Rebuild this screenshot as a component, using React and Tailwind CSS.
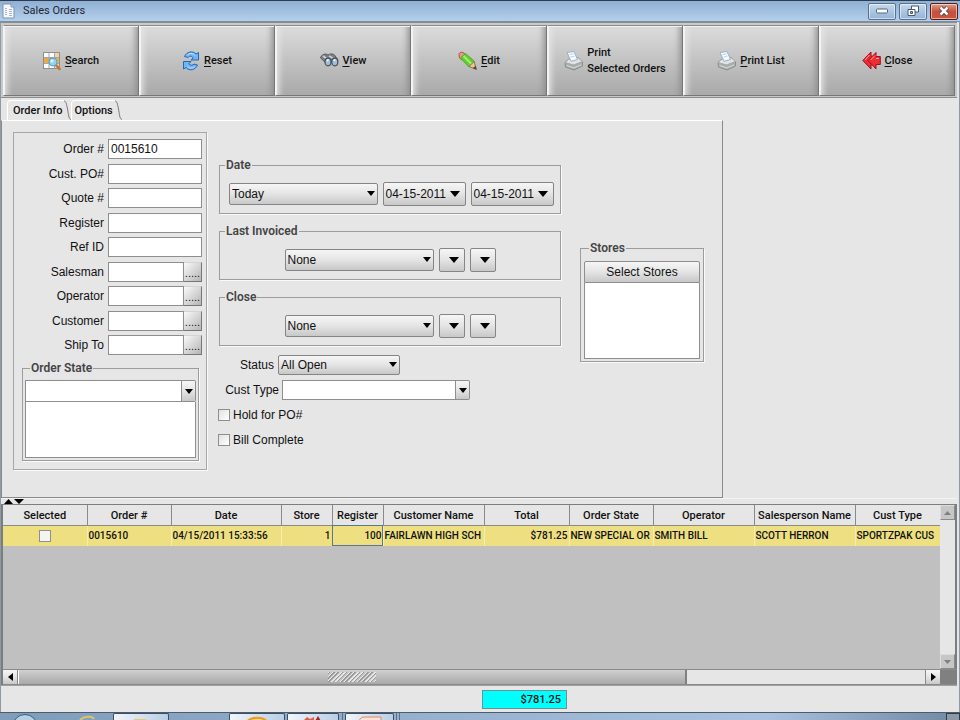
import React from "react";

const UI = "font-[Roboto,'Noto_Sans',sans-serif]";
const field = "border border-[#8e8e8e] bg-white px-[2px] outline-none min-w-0";
const raised = "bg-linear-to-b from-[#f6f6f6] via-[#e4e4e4] to-[#c8c8c8]";

function Caret({ small, className = "" }) {
  return (
    <svg className={className} width={small ? 8 : 10} height={small ? 5 : 6} viewBox="0 0 10 6" aria-hidden="true">
      <path d="M0 0h10L5 6z" fill="#000" />
    </svg>
  );
}

function PageIcon() {
  return (
    <svg width="13" height="16" viewBox="0 0 13 16" aria-hidden="true">
      <path d="M1 1h8l3 3v11H1z" fill="#f4f8fc" stroke="#7f93ab" />
      <path d="M9 1v3h3" fill="#cfdcec" stroke="#7f93ab" />
      <path d="M3 5.500h2M3 7.500h2M3 9.500h2M3 11.500h2M7 6.500h3M7 8.500h3M7 10.500h3M7 12.500h3" stroke="#a9b6c9" />
    </svg>
  );
}

function SearchIcon() {
  return (
    <svg width="18" height="20" viewBox="0 0 18 20" aria-hidden="true">
      <rect x="0.5" y="1.5" width="16" height="16" fill="#fff" stroke="#8b8f96" />
      <rect x="1" y="7" width="15" height="5" fill="#f0a93a" />
      <rect x="12" y="2" width="4" height="15" fill="#f0b45a" fillOpacity="0.6" />
      <path d="M6 2v15M11.500 2v15M1 6.500h15M1 12.500h15" stroke="#9fa6b0" />
      <path d="M13 14l3.500 4" stroke="#c9742a" strokeWidth="2.500" strokeLinecap="round" />
      <circle cx="10" cy="11" r="4" fill="#8fd4f2" stroke="#5aa0c8" />
      <circle cx="9" cy="10" r="1.500" fill="#e6f9ff" />
    </svg>
  );
}

function ResetIcon() {
  return (
    <svg width="18" height="20" viewBox="0 0 18 20" aria-hidden="true">
      <g fill="#6fb6f3" stroke="#2667b5" strokeWidth="1" strokeLinejoin="round">
        <path d="M2.500 5.500C4.500 0.500 11 -0.500 14 3l2.500-1.500v7.500H9l2.200-2.200C9.500 4.500 7 5 6 6.500z" />
        <path d="M15.500 14c-2 5-8 6.500-11.500 2.500L1.500 18v-7.500H9l-2.200 2.300c1.700 2 4.200 1.700 5.200 0.200z" />
      </g>
      <path d="M5 4.500C7 1.800 11 1.800 13 4.500M13 15.500c-2 2.200-5.500 2.200-7.500 0" fill="none" stroke="#c3e2fb" />
    </svg>
  );
}

function ViewIcon() {
  return (
    <svg width="19" height="20" viewBox="0 0 19 20" aria-hidden="true">
      <path d="M0.500 7C1 4 4 3 6 3l2 1c2-1.500 5-1.500 6.500 0L18 9l-2 5-5-3-4 3-3-4z" fill="#7b8087" stroke="#585c62" />
      <path d="M3 5l4 3M9 5l5 3" stroke="#cdd1d6" strokeWidth="1.600" />
      <ellipse cx="8" cy="11" rx="3" ry="3.800" fill="#9fbfdd" stroke="#4b4f56" strokeWidth="1.200" />
      <ellipse cx="14.800" cy="11" rx="3" ry="3.800" fill="#9fbfdd" stroke="#4b4f56" strokeWidth="1.200" />
      <path d="M7 10l1.500-1.500M13.800 10l1.500-1.500" stroke="#fff" strokeWidth="1.500" />
    </svg>
  );
}

function EditIcon() {
  return (
    <svg width="19" height="20" viewBox="0 0 19 20" aria-hidden="true">
      <path d="M1 4C0.500 2 3 0.500 5 1.500L8 4 4 9 1.500 7z" fill="#e9977f" stroke="#a25b45" />
      <path d="M2.500 7L7.500 2.500 16.500 10.500 11 16z" fill="#5fd12e" stroke="#55a535" />
      <path d="M5.500 5l8 8" stroke="#a4ee74" strokeWidth="2" />
      <path d="M11 15.500L16 10.500l2.500 8z" fill="#edc58c" stroke="#94713f" />
      <path d="M14.800 17.300l2.800-2.600 0.900 3.800z" fill="#444" />
    </svg>
  );
}

function PrinterIcon() {
  return (
    <svg width="19" height="20" viewBox="0 0 19 20" aria-hidden="true">
      <path d="M1 11.500l4-3.500 9-1.500 4.500 4V15L10 19l-8.500-3z" fill="#a9adad" stroke="#8a8e8f" />
      <path d="M1 11.500l4-3.500 9-1.500 4.500 4L9.500 14z" fill="#e0e3e3" stroke="#a3a7a8" />
      <path d="M3 1.500l7-1 3.500 8-6.500 1.800z" fill="#f7fbff" stroke="#9cb0c4" />
      <path d="M5.500 3.500l4-0.700M6.500 6l4-0.900" stroke="#b5d2ee" />
      <path d="M2.500 14.500l7.200 2.400 7.800-3" fill="none" stroke="#d9dcdc" />
    </svg>
  );
}

function CloseIcon() {
  return (
    <svg width="19" height="20" viewBox="0 0 19 20" aria-hidden="true">
      <g fill="#ee2c35" stroke="#a50f18" strokeWidth="1" strokeLinejoin="round">
        <path d="M0.800 9.500L9 1v4l3 1v7l-3 1v4z" />
        <path d="M6 9.500L14 1.500V5.500h4.300v8H14V18z" />
      </g>
      <path d="M8.500 9l4.500-4.500M3 9l4.500-5M14 7.500h3" stroke="#ff9da0" />
    </svg>
  );
}

const tools = [
  { icon: SearchIcon, key: "S", rest: "earch" },
  { icon: ResetIcon, key: "R", rest: "eset" },
  { icon: ViewIcon, key: "V", rest: "iew" },
  { icon: EditIcon, key: "E", rest: "dit" },
  { icon: PrinterIcon, lines: ["Print", "Selected Orders"] },
  { icon: PrinterIcon, key: "P", rest: "rint List" },
  { icon: CloseIcon, key: "C", rest: "lose" },
];

function Toolbar() {
  return (
    <div className="border-y border-[#8c8c8c] bg-[#c9c9c9] px-[2px] pt-[2px] pb-px">
      <div className="flex h-[71px]">
        {tools.map(({ icon: Icon, key, rest, lines }) => (
          <button
            key={rest || lines[1]}
            className={`flex min-w-0 flex-1 items-center justify-center gap-1 border border-t-[#8a8a8a] border-l-[#f4f4f4] border-r-[#777] border-b-[#777] bg-linear-to-b from-[#dcdcdc] to-[#a9a9a9] text-left text-[11px] leading-4 font-medium text-[#111] shadow-[inset_1px_1px_0_#f2f2f2,inset_-6px_0_6px_-4px_#8c8c8c,inset_7px_0_6px_-4px_#e6e6e6] ${UI}`}
          >
            <Icon />
            {lines ? (
              <span>
                {lines[0]}
                <br />
                {lines[1]}
              </span>
            ) : (
              <span>
                <u className="underline-offset-2">{key}</u>
                {rest}
              </span>
            )}
          </button>
        ))}
      </div>
    </div>
  );
}

function TitleBar() {
  const control = "flex h-[17px] w-7 items-center justify-center rounded-[2px] border shadow-[inset_0_0_0_1px_#ffffff88]";
  return (
    <header className="flex h-[22px] items-center border-t border-b border-t-[#2c3b50] border-b-[#7c8ea6] bg-linear-to-b from-[#8fb0d3] to-[#b4cfea] px-[2px]">
      <PageIcon />
      <h1 className={`ml-2 flex-1 text-[11px] leading-4 text-[#1c2434] ${UI}`}>Sales Orders</h1>
      <div className="flex gap-[3px]">
        <button aria-label="Minimize" className={`${control} border-[#56708f] bg-linear-to-b from-[#c6d9ee] to-[#93b3d6]`}>
          <svg width="12" height="6" viewBox="0 0 12 6"><rect x="0.500" y="1" width="11" height="4" rx="1" fill="#fff" stroke="#55657a" /></svg>
        </button>
        <button aria-label="Restore" className={`${control} border-[#56708f] bg-linear-to-b from-[#c6d9ee] to-[#93b3d6]`}>
          <svg width="12" height="12" viewBox="0 0 12 12" stroke="#4a5a70">
            <path d="M4.500 1h7v6h-7z" fill="#fff" />
            <path d="M1 4.500h7v6H1z" fill="#fff" />
            <path d="M3.500 6.500h2v2h-2z" fill="#9db8d8" />
          </svg>
        </button>
        <button aria-label="Close window" className={`${control} border-[#5c1a14] bg-linear-to-b from-[#e09b8c] via-[#c8503c] to-[#c5563f]`}>
          <svg width="12" height="10" viewBox="0 0 12 10">
            <path d="M2.500 1.500l7 7M9.500 1.500l-7 7" stroke="#54302c" strokeWidth="4" />
            <path d="M2.500 1.500l7 7M9.500 1.500l-7 7" stroke="#fff" strokeWidth="2.500" />
          </svg>
        </button>
      </div>
    </header>
  );
}

function Group({ title, className = "", children }) {
  return (
    <fieldset className={`min-w-0 border border-[#9c9c9c] shadow-[1px_1px_0_#fafafa] ${className}`}>
      <legend className={`ml-[5px] px-px text-[12px] leading-4 font-semibold text-[#444] ${UI}`}>{title}</legend>
      {children}
    </fieldset>
  );
}

function Choice({ id, label, value, className = "" }) {
  return (
    <div className={`relative ${className}`}>
      <select
        id={id}
        aria-label={label}
        className={`h-full w-full appearance-none rounded-[2px] border border-[#858585] pl-[2px] text-[12px] leading-4 ${raised}`}
      >
        <option>{value}</option>
      </select>
      <Caret small className="pointer-events-none absolute top-1/2 right-[3px] -mt-[3px]" />
    </div>
  );
}

function DateButton({ label, value }) {
  return (
    <button
      aria-label={label}
      className={`flex h-6 items-center justify-end gap-1 rounded-[2px] border border-[#858585] pr-[5px] ${value ? "w-[83px]" : "w-[26px]"} ${raised}`}
    >
      {value}
      <Caret />
    </button>
  );
}

function Combo({ id, label, className = "" }) {
  return (
    <div className={`flex ${className}`}>
      <input id={id} aria-label={label} className={`flex-1 ${field}`} />
      <button aria-label="Open list" className={`flex w-[14px] items-center justify-center rounded-r-[2px] border border-l-0 border-[#8e8e8e] ${raised}`}>
        <Caret small />
      </button>
    </div>
  );
}

const orderFields = [
  ["Order #", "0015610"],
  ["Cust. PO#"],
  ["Quote #"],
  ["Register"],
  ["Ref ID"],
  ["Salesman", "", true],
  ["Operator", "", true],
  ["Customer", "", true],
  ["Ship To", "", true],
];

function OrderFields() {
  return (
    <div className="flex h-[216px] flex-col justify-between pr-1">
      {orderFields.map(([label, value, lookup]) => {
        const id = label.replace(/\W/g, "");
        return (
          <div key={label} className="flex h-5 items-center gap-1">
            <label htmlFor={id} className="flex-1 text-right">{label}</label>
            <div className="flex h-5 w-[94px]">
              <input id={id} defaultValue={value} className={`flex-1 ${field}`} />
              {lookup && (
                <button
                  aria-label={`Find ${label}`}
                  className="w-[18px] border border-l-0 border-t-[#d4d4d4] border-r-[#777] border-b-[#777] bg-linear-to-br from-[#fafafa] to-[#b5b5b5] text-[11px] leading-5"
                >
                  .....
                </button>
              )}
            </div>
          </div>
        );
      })}
    </div>
  );
}

function Check({ label }) {
  return (
    <label className="flex h-5 items-center gap-[3px]">
      <input type="checkbox" className="size-3 appearance-none border border-[#8e8e8e] bg-linear-to-br from-[#e2e2e2] to-white" />
      {label}
    </label>
  );
}

function TabEdge() {
  return (
    <svg width="7" height="20" viewBox="0 0 7 20" aria-hidden="true">
      <path d="M0 1C2 1 2.500 4 3.500 9s1 10 3.500 10.500" fill="none" stroke="#777" />
    </svg>
  );
}

function Tabs() {
  const tab = `flex h-5 items-start rounded-tl-[4px] border-l border-t border-white pt-[2px] pr-[2px] text-[11px] leading-4 font-medium text-[#111] ${UI}`;
  return (
    <div role="tablist" className="flex items-end pt-[2px] pl-[6px]">
      <button role="tab" aria-selected="true" className={`${tab} pl-[5px]`}>Order Info</button>
      <TabEdge />
      <button role="tab" aria-selected="false" className={`${tab} pl-[2px]`}>Options</button>
      <TabEdge />
    </div>
  );
}

function OrderInfo() {
  return (
    <div role="tabpanel" className="flex w-fit items-start border border-t-white border-r-[#8a8a8a] border-b-[#8a8a8a] border-l-[#8a8a8a] pt-[11px] pr-[18px] pb-[27px] pl-[11px]">
      <div className="w-[194px] border border-[#a6a6a6] pt-[6px] pb-2 shadow-[1px_1px_0_#fafafa]">
        <OrderFields />
        <Group title="Order State" className="mr-[7px] ml-2 mt-[5px] px-[2px] pt-1 pb-[2px]">
          <Combo label="Order state" className="h-[22px]" />
          <textarea aria-label="Chosen order states" className="block h-14 w-full resize-none border border-t-0 border-[#8e8e8e] bg-white outline-none" />
        </Group>
      </div>

      <div className="ml-[11px] flex w-[343px] flex-col gap-[5px] pt-[25px]">
        <div className="mb-1 flex flex-col gap-[9px] pl-px">
          <Group title="Date" className="pb-[7px]">
            <div className="flex items-center justify-end gap-[5px] pt-[9px] pr-[6px]">
              <Choice label="Date range" value="Today" className="h-[22px] w-[149px]" />
              <DateButton label="From date" value="04-15-2011" />
              <DateButton label="To date" value="04-15-2011" />
            </div>
          </Group>
          {["Last Invoiced", "Close"].map((title) => (
            <Group key={title} title={title} className="pb-[7px]">
              <div className="flex items-center justify-center gap-[5px] pt-[9px]">
                <Choice label={`${title} range`} value="None" className="h-[22px] w-[149px]" />
                <DateButton label={`${title} from`} />
                <DateButton label={`${title} to`} />
              </div>
            </Group>
          ))}
        </div>
        <div className="flex h-5 items-center gap-1">
          <label htmlFor="status" className="w-14 text-right">Status</label>
          <Choice id="status" value="All Open" className="h-5 w-[122px]" />
        </div>
        <div className="flex h-5 items-center gap-[3px]">
          <label htmlFor="custType" className="w-[61px] text-right">Cust Type</label>
          <Combo id="custType" className="h-5 w-[188px]" />
        </div>
        <Check label="Hold for PO#" />
        <Check label="Bill Complete" />
      </div>

      <Group title="Stores" className="mt-[108px] ml-[19px] w-[124px] px-[3px] pt-[5px] pb-[2px]">
        <button className={`h-[22px] w-full rounded-t-[2px] border border-[#8e8e8e] ${raised}`}>Select Stores</button>
        <textarea aria-label="Chosen stores" className="block h-[76px] w-full resize-none border border-t-0 border-[#8e8e8e] bg-white outline-none" />
      </Group>
    </div>
  );
}

const columns = [
  ["Selected", "w-[84px]"],
  ["Order #", "w-[84px]", "0015610"],
  ["Date", "w-[110px]", "04/15/2011 15:33:56"],
  ["Store", "w-[51px]", "1", "right"],
  ["Register", "w-[51px]", "100", "right"],
  ["Customer Name", "w-[101px]", "FAIRLAWN HIGH SCH"],
  ["Total", "w-[85px]", "$781.25", "right"],
  ["Order State", "w-[84px]", "NEW SPECIAL OR"],
  ["Operator", "w-[101px]", "SMITH BILL"],
  ["Salesperson Name", "w-[101px]", "SCOTT HERRON"],
  ["Cust Type", "w-[85px]", "SPORTZPAK CUS"],
];

function Results() {
  return (
    <section className="flex flex-1 flex-col border-t border-l-2 border-[#7d7d7d]">
      <div className="flex flex-1">
        <div className="min-w-0 flex-1 overflow-hidden bg-[#c0c0c0]">
          <table className={`w-full table-fixed border-collapse ${UI}`}>
            <thead>
              <tr className="h-5 bg-[#e6e6e6]">
                {columns.map(([name, width]) => (
                  <th key={name} scope="col" className={`${width} overflow-hidden border-r border-b border-[#8a8a8a] p-0 pt-[2px] text-center text-[11px] leading-4 font-medium whitespace-nowrap text-[#111]`}>
                    {name}
                  </th>
                ))}
              </tr>
            </thead>
            <tbody>
              <tr className="h-[21px] bg-[#eee081] text-[10px] leading-4 font-medium text-[#111]">
                {columns.map(([name, , value, align]) => (
                  <td
                    key={name}
                    className={`overflow-hidden border-r border-[#f5edb4] px-px py-0 whitespace-nowrap ${align === "right" ? "text-right" : "text-left"} ${name === "Register" ? "outline outline-1 -outline-offset-1 outline-[#5b7691]" : ""}`}
                  >
                    {name === "Selected" ? (
                      <input type="checkbox" aria-label="Select order 0015610" className="mx-auto block size-3 appearance-none border border-[#8e8e8e] bg-[#f4f4f4]" />
                    ) : (
                      value
                    )}
                  </td>
                ))}
              </tr>
            </tbody>
          </table>
        </div>
        <div className="flex w-[17px] flex-col justify-between border-r-2 border-[#7d7d7d] bg-[#e6e6e6]">
          <button aria-label="Scroll up" className="flex h-[15px] items-center justify-center border border-[#8a8a8a] border-t-[#ddd] border-l-[#ddd] bg-[#c6c6c6]">
            <svg width="7" height="4" viewBox="0 0 7 4"><path d="M0 4h7L3.500 0z" fill="#808080" /></svg>
          </button>
          <button aria-label="Scroll down" className="flex h-[15px] items-center justify-center border border-[#8a8a8a] border-t-[#ddd] border-l-[#ddd] bg-[#c6c6c6]">
            <svg width="7" height="4" viewBox="0 0 7 4"><path d="M0 0h7L3.500 4z" fill="#808080" /></svg>
          </button>
        </div>
      </div>
      <div className="flex h-4 border-t border-b border-[#8a8a8a]">
        <button aria-label="Scroll left" className={`flex w-[15px] items-center justify-center border-r border-[#8a8a8a] ${raised}`}>
          <svg width="5" height="8" viewBox="0 0 5 8"><path d="M5 0v8L0 4z" fill="#000" /></svg>
        </button>
        <div className="flex flex-1 bg-[#e6e6e6]">
          <div className="flex flex-[14] items-center justify-center border-r-2 border-l border-l-white border-r-[#808080] bg-linear-to-b from-[#d0d0d0] to-[#a9a9a9]">
            <div className="h-[10px] w-12 bg-[repeating-linear-gradient(135deg,#e6e6e6_0_1px,#999_1px_2px,#c4c4c4_2px_3px)]" />
          </div>
          <div className="flex-[5]" />
        </div>
        <button aria-label="Scroll right" className={`flex w-[15px] items-center justify-center border-l border-[#8a8a8a] ${raised}`}>
          <svg width="5" height="8" viewBox="0 0 5 8"><path d="M0 0v8l5-4z" fill="#000" /></svg>
        </button>
        <div className="w-[17px] bg-[#808080]" />
      </div>
    </section>
  );
}

function Taskbar() {
  const task = "flex justify-center rounded-t-[2px] border border-b-0 border-[#3d4f63] bg-linear-to-r from-[#f0f5fa] to-[#b9cee5]";
  return (
    <footer className="flex h-2 overflow-hidden border-t border-[#4c5c6c] bg-linear-to-r from-[#7f9cbb] via-[#a9c1de] via-80% to-[#7088a2]">
      <div className="flex w-[113px] items-start pl-3">
        <svg width="26" height="8" viewBox="0 0 26 8" aria-hidden="true">
          <circle cx="13" cy="14" r="12.500" fill="#b7cfe3" stroke="#3f5a78" />
        </svg>
        <svg width="18" height="8" viewBox="0 0 18 8" className="ml-10" aria-hidden="true">
          <path d="M2 8c1-4 12-6 14-2" fill="none" stroke="#d9c46a" strokeWidth="2" />
        </svg>
      </div>
      <div className={`w-[56px] ${task}`}>
        <svg width="16" height="7" viewBox="0 0 16 7" aria-hidden="true"><path d="M1 7V5h12v2z" fill="#ecc968" /></svg>
      </div>
      <div className={`ml-[60px] w-[56px] ${task}`}>
        <svg width="24" height="7" viewBox="0 0 24 7" aria-hidden="true"><path d="M1 9C5 2 19 2 23 9z" fill="#f7d98c" stroke="#ef9a1c" strokeWidth="2" /></svg>
      </div>
      <div className={`ml-[2px] w-[52px] ${task}`}>
        <svg width="24" height="7" viewBox="0 0 24 7" aria-hidden="true"><path d="M2 7l4-4 3 2 4-2v4z" fill="#e0603f" /><path d="M14 7l3-5 3 5z" fill="#a8281c" /></svg>
      </div>
      <div className="w-1 border-r border-[#5c6f85]" />
      <div className={`ml-[2px] w-[49px] ${task}`}>
        <svg width="24" height="7" viewBox="0 0 24 7" aria-hidden="true"><path d="M1 7c1-3 3-4 6-4h16v4z" fill="#f8e3db" stroke="#ee8560" /></svg>
      </div>
      <div className="w-[3px] border-r border-[#5c6f85]" />
      <div className="w-[3px] border-r border-[#5c6f85]" />
      <div className="ml-auto w-[14px] border border-b-0 border-[#2f3c4a] bg-[#8c9aa8]" />
    </footer>
  );
}

export default function App() {
  return (
    <div className="flex min-h-screen flex-col bg-[#e6e6e6] font-['Liberation_Sans',Arial,sans-serif] text-[12px] leading-4 text-[#111]">
      <TitleBar />
      <div className="flex flex-1 flex-col border-r border-l border-[#8f9aa8] pr-[2px]">
        <main className="flex flex-1 flex-col">
          <Toolbar />
          <Tabs />
          <OrderInfo />
          <div className="flex h-[6px] items-center border-t border-[#f4f4f4] pl-[3px]">
            <svg width="20" height="5" viewBox="0 0 20 5" aria-hidden="true">
              <path d="M0 5h9L4.500 0zM10 0h10l-5 5z" fill="#000" />
            </svg>
          </div>
          <Results />
        </main>
        <div className="flex h-[27px] items-center justify-center border-t border-[#a0a0a0] pl-[91px]">
          <output aria-label="Order total" className={`h-[19px] w-[85px] border border-[#6f9090] bg-[#00ffff] pr-[5px] text-right text-[11px] leading-[18px] font-medium ${UI}`}>
            $781.25
          </output>
        </div>
      </div>
      <Taskbar />
    </div>
  );
}
